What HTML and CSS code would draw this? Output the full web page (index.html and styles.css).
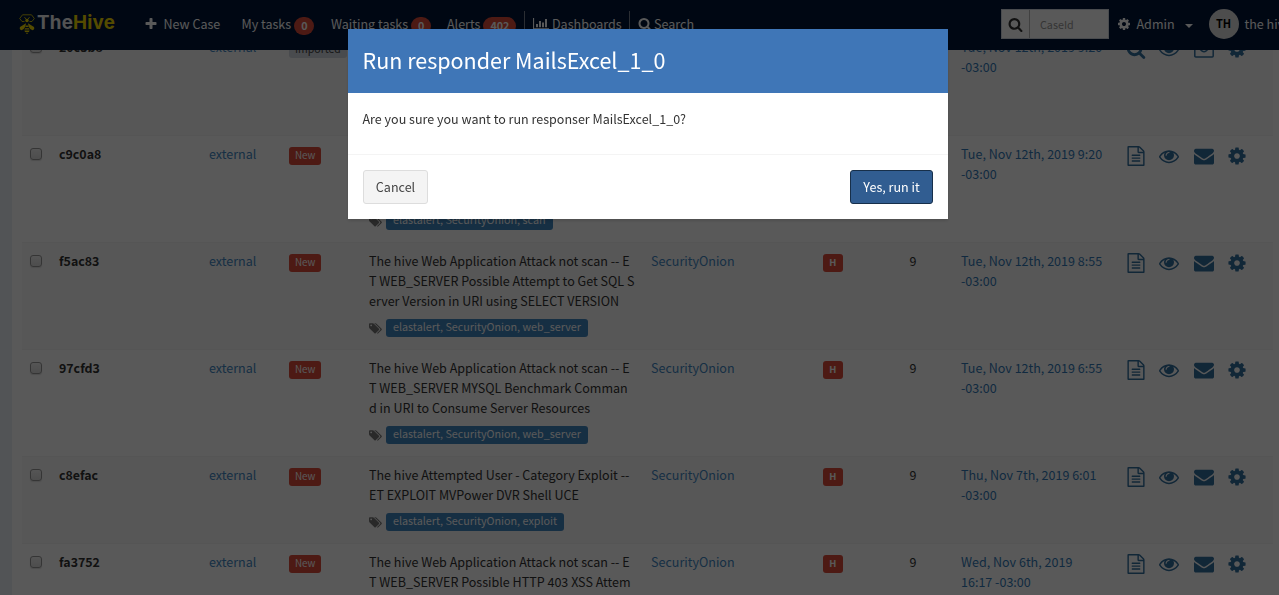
FILE: index.html
```
<!DOCTYPE html>
<html lang="en">
<head>
<meta charset="utf-8">
<title>TheHive - Alerts</title>
<link rel="stylesheet" href="styles.css">
</head>
<body>
<svg class="sprite" aria-hidden="true">
<symbol id="plus" viewBox="0 0 1792 1792"><path d="M1600 736v192q0 40-28 68t-68 28h-416v416q0 40-28 68t-68 28h-192q-40 0-68-28t-28-68v-416h-416q-40 0-68-28t-28-68v-192q0-40 28-68t68-28h416v-416q0-40 28-68t68-28h192q40 0 68 28t28 68v416h416q40 0 68 28t28 68z"/></symbol>
<symbol id="cog" viewBox="0 0 1792 1792"><path d="M1152 896q0-106-75-181t-181-75-181 75-75 181 75 181 181 75 181-75 75-181zm512-109v222q0 12-8 23t-20 13l-185 28q-19 54-39 91 35 50 107 138 10 12 10 25t-9 23q-27 37-99 108t-94 71q-12 0-26-9l-138-108q-44 23-91 38-16 136-29 186-7 28-36 28h-222q-14 0-24.500-8.500t-11.500-21.500l-28-184q-49-16-90-37l-141 107q-10 9-25 9-14 0-25-11-126-114-165-168-7-10-7-23 0-12 8-23 15-21 51-66.500t54-70.500q-27-50-41-99l-183-27q-13-2-21-12.500t-8-23.500v-222q0-12 8-23t19-13l186-28q14-46 39-92-40-57-107-138-10-12-10-24 0-10 9-23 26-36 98.500-107.500t94.500-71.500q13 0 26 10l138 107q44-23 91-38 16-136 29-186 7-28 36-28h222q14 0 24.500 8.500t11.500 21.500l28 184q49 16 90 37l142-107q9-9 24-9 13 0 25 10 129 119 165 170 7 8 7 22 0 12-8 23-15 21-51 66.500t-54 70.500q26 50 41 98l183 28q13 2 21 12.500t8 23.500z"/></symbol>
<symbol id="envelope" viewBox="0 0 1792 1792"><path d="M1792 710v794q0 66-47 113t-113 47h-1472q-66 0-113-47t-47-113v-794q44 49 101 87 362 246 497 345 57 42 92.500 65.500t94.500 48 110 24.500h2q51 0 110-24.500t94.500-48 92.500-65.500q170-123 498-345 57-39 100-87zm0-294q0 79-49 151t-122 123q-376 261-468 325-10 7-42.500 31t-54 38.500-52 32.500-57.500 27-50 9h-2q-23 0-50-9t-57.500-27-52-32.500-54-38.500-42.500-31q-91-64-262-182.500t-205-142.500q-62-42-117-115.500t-55-136.500q0-78 41.500-130t118.500-52h1472q65 0 112.500 47t47.500 113z"/></symbol>
<symbol id="envelope-o" viewBox="0 0 20 20"><path d="M.8 4.500Q.8 3.700 1.800 3.700H18.200Q19.200 3.700 19.200 4.500V17Q19.200 17.900 18.200 17.900H1.800Q.8 17.900.8 17ZM1 6.500 8 12Q10 13.300 12 12L19 6.500" fill="none" stroke="currentColor" stroke-width="1.500"/></symbol>
<symbol id="eye" viewBox="0 0 1792 1792"><path d="M1664 960q-152-236-381-353 61 104 61 225 0 185-131.500 316.500t-316.500 131.500-316.500-131.500-131.500-316.500q0-121 61-225-229 117-381 353 133 205 333.500 326.500t434.500 121.500 434.500-121.500 333.500-326.500zm-720-384q0-20-14-34t-34-14q-125 0-214.500 89.500t-89.500 214.500q0 20 14 34t34 14 34-14 14-34q0-86 61-147t147-61q20 0 34-14t14-34zm848 384q0 34-20 69-140 230-376.500 368.500t-499.500 138.500-499.500-139-376.500-368q-20-35-20-69t20-69q140-229 376.500-368t499.500-139 499.500 139 376.500 368q20 35 20 69z"/></symbol>
<symbol id="search" viewBox="0 0 1792 1792"><path d="M1216 832q0-185-131.500-316.500t-316.500-131.500-316.500 131.500-131.500 316.500 131.500 316.500 316.500 131.500 316.500-131.500 131.500-316.500zm512 832q0 52-38 90t-90 38q-54 0-90-38l-343-342q-179 124-399 124-143 0-273.500-55.500t-225-150-150-225-55.500-273.500 55.500-273.500 150-225 225-150 273.500-55.500 273.500 55.500 225 150 150 225 55.500 273.500q0 220-124 399l343 343q37 37 37 90z"/></symbol>
<symbol id="file" viewBox="0 0 1792 1792"><path d="M1596 380q28 28 48 76t20 88v1152q0 40-28 68t-68 28h-1344q-40 0-68-28t-28-68v-1600q0-40 28-68t68-28h896q40 0 88 20t76 48zm-444-244v376h376q-10-29-22-41l-313-313q-12-12-41-22zm384 1528v-1024h-416q-40 0-68-28t-28-68v-416h-768v1536h1280zm-1024-864q0-14 9-23t23-9h704q14 0 23 9t9 23v64q0 14-9 23t-23 9h-704q-14 0-23-9t-9-23v-64zm736 224q14 0 23 9t9 23v64q0 14-9 23t-23 9h-704q-14 0-23-9t-9-23v-64q0-14 9-23t23-9h704zm0 256q14 0 23 9t9 23v64q0 14-9 23t-23 9h-704q-14 0-23-9t-9-23v-64q0-14 9-23t23-9h704z"/></symbol>
<symbol id="tags" viewBox="0 0 1920 1792"><path d="M448 448q0-53-37.500-90.500t-90.500-37.500-90.500 37.500-37.500 90.500 37.500 90.500 90.500 37.500 90.500-37.500 37.500-90.500zm1067 576q0 53-37 90l-491 492q-39 37-91 37-53 0-90-37l-715-716q-38-37-64.500-101t-26.500-117v-416q0-52 38-90t90-38h416q53 0 117 26.500t102 64.500l715 714q37 39 37 91zm384 0q0 53-37 90l-491 492q-39 37-91 37-36 0-59-14t-53-45l470-470q37-37 37-90 0-52-37-91l-715-714q-38-38-102-64.500t-117-26.500h224q53 0 117 26.500t102 64.500l715 714q37 39 37 91z"/></symbol>
<symbol id="chart" viewBox="0 0 16 14"><path d="M0 1H1.100V11.200H16V12.200H0ZM3 7H5V10.200H3ZM6 4H8V10.200H6ZM9 5.500H11V10.200H9ZM12 2H14V10.200H12Z"/></symbol>
</svg>

<header class="navbar">
  <a class="logo">
    <svg class="bee" viewBox="0 0 16 20"><path d="M5.500 7.500H3L.7 4.500 3.500.8H12.500L15.300 4.500 13 7.500H10.500" fill="none" stroke="currentColor" stroke-width=".8"/><path d="M5.500 3.200 7 5M10.500 3.200 9 5" stroke="currentColor" stroke-width=".9"/><circle cx="8" cy="6.500" r="1.700"/><path d="M7 9.200 6.400 12.500Q4.800 16 2.500 16.200 0 15.500 1 13ZM9 9.200 9.600 12.500Q11.200 16 13.500 16.200 16 15.500 15 13Z"/><path d="M7 11.500H9L9.600 13H6.400ZM6 14.300H10L10.500 15.600H5.500ZM5.400 16.600H10.600L10 17.900H6ZM6.500 18.700H9.500L8 20Z"/></svg>
    <span class="brand">The<b>Hive</b></span>
  </a>
  <a class="nav"><svg class="i14"><use href="#plus"/></svg></a>
  <a class="nav">New Case</a>
  <a class="nav">My tasks <i class="badge">0</i></a>
  <a class="nav">Waiting tasks <i class="badge">0</i></a>
  <a class="nav">Alerts <i class="badge">402</i></a>
  <a class="nav ruled"><svg class="chart"><use href="#chart"/></svg>Dashboards</a>
  <a class="nav ruled"><svg class="i14 find"><use href="#search"/></svg>Search</a>
  <div class="case"><span class="case-btn"><svg class="i15"><use href="#search"/></svg></span><span class="case-in">CaseId</span></div>
  <a class="nav"><svg class="i14"><use href="#cog"/></svg></a>
  <a class="nav">Admin<i class="caret"></i></a>
  <span class="avatar">TH</span>
  <a class="nav">the hive</a>
</header>

<main class="content">
  <div class="row odd">
    <i class="check"></i><b>20c3b8</b><a>external</a><span><em class="label gray">Imported</em></span><div></div><span></span><span></span><span></span>
    <a class="date">Tue, Nov 12th, 2019 9:20 -03:00</a>
    <div class="actions"><svg><use href="#search"/></svg><svg><use href="#eye"/></svg><svg><use href="#envelope-o"/></svg><svg><use href="#cog"/></svg></div>
  </div>
  <div class="row">
    <i class="check"></i><b>c9c0a8</b><a>external</a><span><em class="label red">New</em></span>
    <div class="tail"><div class="tags"><svg><use href="#tags"/></svg><em class="label blue">elastalert, SecurityOnion, scan</em></div></div>
    <span></span><span></span><span></span>
    <a class="date">Tue, Nov 12th, 2019 9:20 -03:00</a>
    <div class="actions"><svg><use href="#file"/></svg><svg><use href="#eye"/></svg><svg><use href="#envelope"/></svg><svg><use href="#cog"/></svg></div>
  </div>
  <div class="row odd">
    <i class="check"></i><b>f5ac83</b><a>external</a><span><em class="label red">New</em></span>
    <div>The hive Web Application Attack not scan -- E<br>T WEB_SERVER Possible Attempt to Get SQL S<br>erver Version in URI using SELECT VERSION<div class="tags"><svg><use href="#tags"/></svg><em class="label blue">elastalert, SecurityOnion, web_server</em></div></div>
    <a>SecurityOnion</a><span><em class="label red sev">H</em></span><span>9</span>
    <a class="date">Tue, Nov 12th, 2019 8:55 -03:00</a>
    <div class="actions"><svg><use href="#file"/></svg><svg><use href="#eye"/></svg><svg><use href="#envelope"/></svg><svg><use href="#cog"/></svg></div>
  </div>
  <div class="row">
    <i class="check"></i><b>97cfd3</b><a>external</a><span><em class="label red">New</em></span>
    <div>The hive Web Application Attack not scan -- E<br>T WEB_SERVER MYSQL Benchmark Comman<br>d in URI to Consume Server Resources<div class="tags"><svg><use href="#tags"/></svg><em class="label blue">elastalert, SecurityOnion, web_server</em></div></div>
    <a>SecurityOnion</a><span><em class="label red sev">H</em></span><span>9</span>
    <a class="date">Tue, Nov 12th, 2019 6:55 -03:00</a>
    <div class="actions"><svg><use href="#file"/></svg><svg><use href="#eye"/></svg><svg><use href="#envelope"/></svg><svg><use href="#cog"/></svg></div>
  </div>
  <div class="row odd short">
    <i class="check"></i><b>c8efac</b><a>external</a><span><em class="label red">New</em></span>
    <div>The hive Attempted User - Category Exploit --<br>ET EXPLOIT MVPower DVR Shell UCE<div class="tags"><svg><use href="#tags"/></svg><em class="label blue">elastalert, SecurityOnion, exploit</em></div></div>
    <a>SecurityOnion</a><span><em class="label red sev">H</em></span><span>9</span>
    <a class="date">Thu, Nov 7th, 2019 6:01<br>-03:00</a>
    <div class="actions"><svg><use href="#file"/></svg><svg><use href="#eye"/></svg><svg><use href="#envelope"/></svg><svg><use href="#cog"/></svg></div>
  </div>
  <div class="row last">
    <i class="check"></i><b>fa3752</b><a>external</a><span><em class="label red">New</em></span>
    <div>The hive Web Application Attack not scan -- E<br>T WEB_SERVER Possible HTTP 403 XSS Attem</div>
    <a>SecurityOnion</a><span><em class="label red sev">H</em></span><span>9</span>
    <a class="date">Wed, Nov 6th, 2019<br>16:17 -03:00</a>
    <div class="actions"><svg><use href="#file"/></svg><svg><use href="#eye"/></svg><svg><use href="#envelope"/></svg><svg><use href="#cog"/></svg></div>
  </div>
</main>

<div class="backdrop">
  <section class="modal">
    <h3 class="modal-title">Run responder MailsExcel_1_0</h3>
    <p class="modal-body">Are you sure you want to run responser MailsExcel_1_0?</p>
    <footer class="modal-footer"><button class="btn">Cancel</button><button class="btn primary">Yes, run it</button></footer>
  </section>
</div>
</body>
</html>
```
FILE: styles.css
```
* { box-sizing: border-box; }
body {
  margin: 0;
  height: 595px;
  overflow: hidden;
  background: #ecf0f5;
  color: #333;
  font: 12.54px/20px "Noto Sans CJK SC", "Noto Sans", sans-serif;
}
svg { fill: currentColor; display: block; flex: none; }
.sprite { position: absolute; width: 0; height: 0; }
i, em { font-style: normal; }

.navbar {
  position: fixed;
  inset: 0 0 auto 0;
  z-index: 2;
  height: 50px;
  overflow: hidden;
  padding: 0 0 2px 18.500px;
  background: #001537;
  color: #fff;
  display: grid;
  grid-template-columns: 125px 20px 78px 89.500px 116px 77px 105px 372px 115.500px 20px 72px 36px 80px;
  align-items: center;
}
.nav { display: flex; align-items: center; white-space: nowrap; height: 48px; }
.logo { display: flex; align-items: center; gap: 2.500px; color: #f0d800; }
.bee { width: 16px; height: 20px; }
.brand { font: 700 18.800px/24px Inter, sans-serif; letter-spacing: .2px; color: #eee; margin-top: -2px; }
.brand b { color: #f0d800; font-weight: 700; }
.i14 { width: 14px; height: 14px; }
.i15 { width: 15px; height: 15px; }
.badge {
  margin: 4px 0 0 3px;
  padding: 0 7px;
  height: 18px;
  line-height: 18px;
  border-radius: 10px;
  background: #dd4b39;
  font-size: 10.750px;
  font-weight: 700;
}
.ruled { border-left: 1px solid #7d8593; height: 26px; padding-left: 8px; }
.chart { width: 16px; height: 14px; margin-right: 3px; }
.find { margin-right: 2px; }
.case { display: flex; width: 108px; height: 30px; background: #fff; border: 1px solid #d2d6de; }
.case-btn { width: 28px; display: flex; align-items: center; justify-content: center; color: #333; border-right: 1px solid #bbb; }
.case-in { padding: 5px 10px; color: #999; font-size: 10.750px; line-height: 20px; }
.caret { margin: 3px 0 0 10px; border: 4px solid transparent; border-top-color: #fff; border-bottom: 0; }
.avatar { width: 30px; height: 30px; border-radius: 50%; background: #ddd; color: #000; font: 700 11px/29px "Noto Sans CJK SC", sans-serif; text-align: center; }

.content { margin-left: 12px; padding: 28px 6px 0 10px; height: 595px; overflow: hidden; background: #fff; }
.row {
  display: grid;
  grid-template-columns: 29px 150px 80px 80px 282px 164px 74px 72px 165px 155px;
  height: 107px;
  padding-top: 8px;
  border-top: 1px solid #f4f4f4;
}
.row.odd { background: #f9f9f9; }
.row.short { height: 87px; }
.row.last { height: 52px; }
.row > * { margin-left: 8px; white-space: nowrap; }
.row > b { font-weight: 700; font-size: 12.400px; color: #333; }
.row > a { color: #4288c4; }
.row > a.date { color: #337ab7; white-space: normal; padding-right: 8px; }
.row > span:nth-child(7) { margin-left: 16px; }
.row > span:nth-child(8) { margin-left: 28.500px; }
.row > .check { width: 12px; height: 12px; margin-top: 4px; border: 1px solid #999; border-radius: 3px; background: linear-gradient(#f4f4f4, #ddd); box-shadow: 0 1px 1px #ddd; }
.label {
  display: block;
  width: max-content;
  height: 18px;
  padding: 0 6px;
  border-radius: 3px;
  color: #fff;
  font-size: 9.800px;
  line-height: 17px;
}
span > .label { margin-top: 3px; }
.red { background: #dd4b39; }
.gray { background: #d2d6de; color: #444; font-size: 10.500px; }
.blue { background: #3f86c0; font-size: 10.750px; padding: 0 7px; line-height: 16px; }
.sev { font-weight: 700; font-size: 9.400px; padding: 0 6.300px; }
.tags { display: flex; gap: 4px; padding-top: 8px; color: #777; }
.tags svg { width: 13px; height: 13px; margin-top: 3px; }
.tail { padding-top: 60px; }
.actions { display: flex; color: #33709f; padding-top: 2px; }
.actions svg { width: 20px; height: 20px; }
.actions svg + svg { margin-left: 13px; }
.actions svg:nth-child(3) { margin-left: 15px; }

.backdrop { position: fixed; inset: 0; z-index: 3; background: rgba(0, 0, 0, .65); padding-top: 29px; }
.modal { width: 600px; height: 190px; margin-left: 348px; background: #fff; box-shadow: 0 2px 3px rgba(0, 0, 0, .125); }
.modal-title { margin: 0; height: 64px; padding-left: 14.500px; background: #3f76b7; color: #fff; font-size: 21.500px; font-weight: 400; line-height: 62px; }
.modal-body { margin: 0; height: 61px; padding: 16px 14.500px; }
.modal-footer { border-top: 1px solid #f4f4f4; padding: 15px; display: flex; justify-content: space-between; }
.btn { height: 34px; width: 65px; padding: 0; border: 1px solid #ddd; border-radius: 3px; background: #f4f4f4; color: #444; font: inherit; }
.btn.primary { width: 83px; background: #315d91; border-color: #172f4a; color: #fff; }
```
